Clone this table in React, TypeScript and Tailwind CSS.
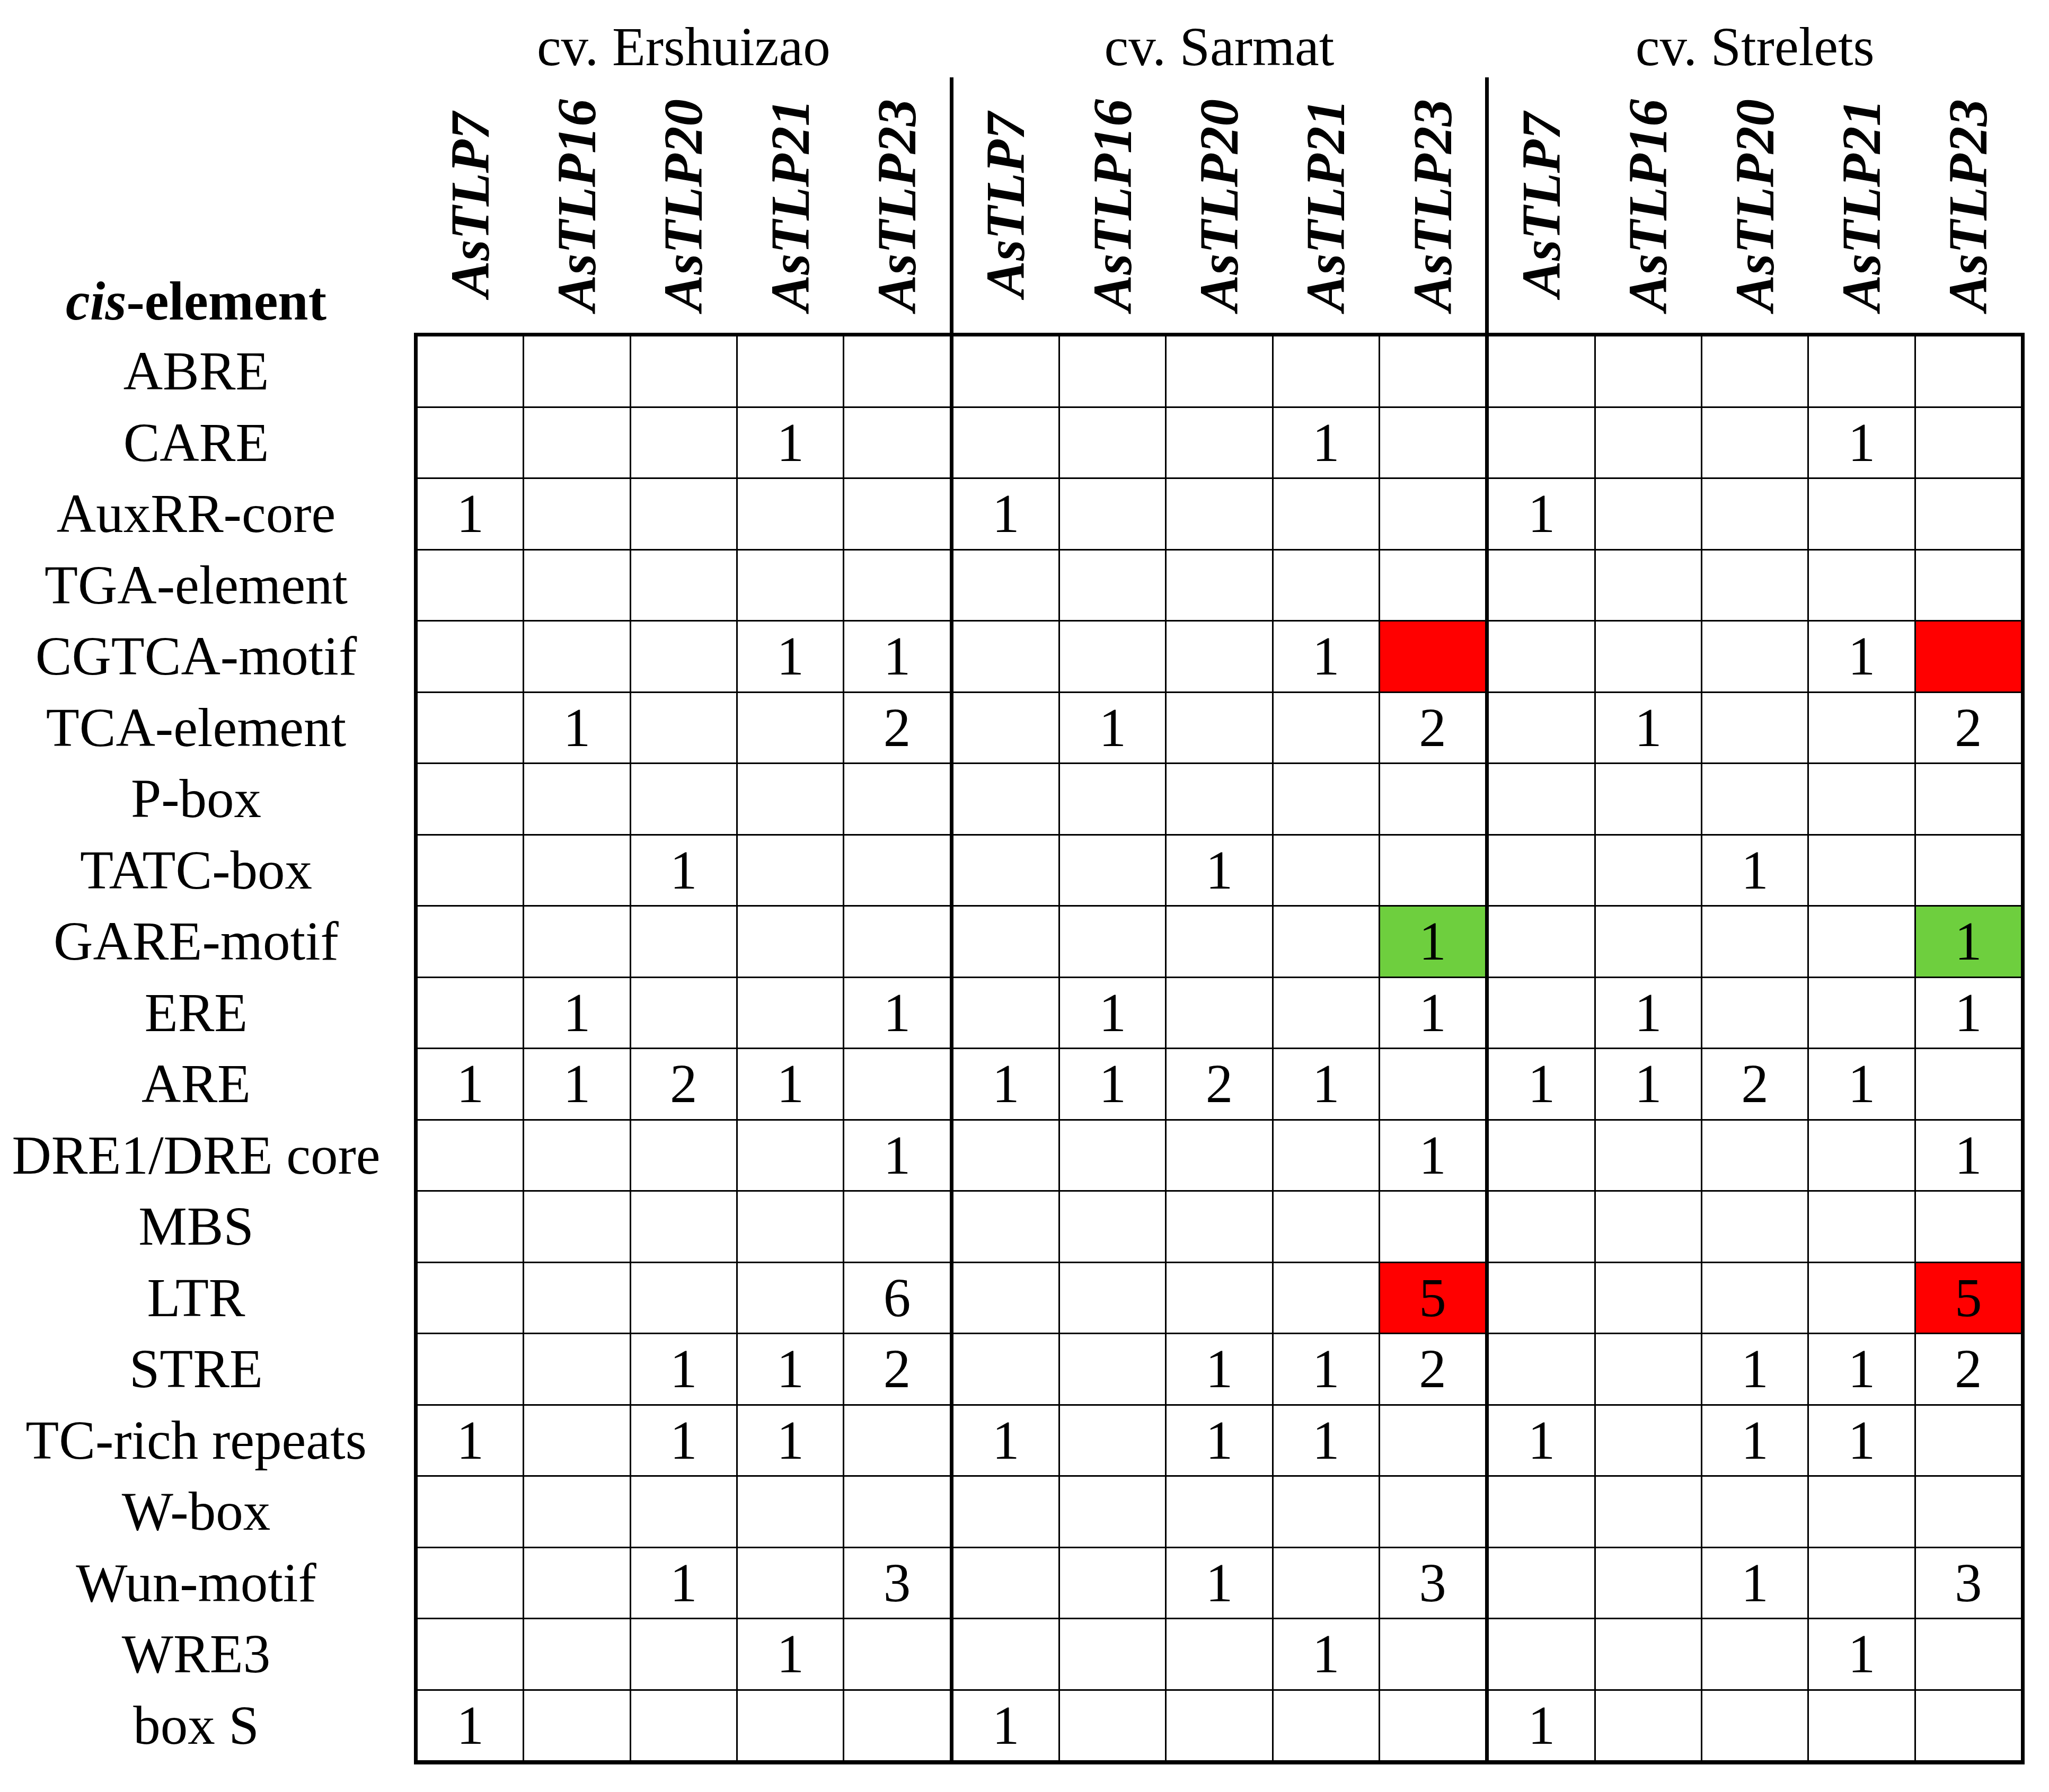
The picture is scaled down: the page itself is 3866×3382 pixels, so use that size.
type Cell = { v: string; c?: "red" | "green" };

const sections = ["cv. Ershuizao", "cv. Sarmat", "cv. Strelets"];
const genes = ["AsTLP7", "AsTLP16", "AsTLP20", "AsTLP21", "AsTLP23"];

// counts per cis-element, same five genes in every cultivar
const rows: { name: string; base: string[]; alt?: Cell }[] = [
  { name: "ABRE", base: ["", "", "", "", ""] },
  { name: "CARE", base: ["", "", "", "1", ""] },
  { name: "AuxRR-core", base: ["1", "", "", "", ""] },
  { name: "TGA-element", base: ["", "", "", "", ""] },
  { name: "CGTCA-motif", base: ["", "", "", "1", "1"], alt: { v: "", c: "red" } },
  { name: "TCA-element", base: ["", "1", "", "", "2"] },
  { name: "P-box", base: ["", "", "", "", ""] },
  { name: "TATC-box", base: ["", "", "1", "", ""] },
  { name: "GARE-motif", base: ["", "", "", "", ""], alt: { v: "1", c: "green" } },
  { name: "ERE", base: ["", "1", "", "", "1"] },
  { name: "ARE", base: ["1", "1", "2", "1", ""] },
  { name: "DRE1/DRE core", base: ["", "", "", "", "1"] },
  { name: "MBS", base: ["", "", "", "", ""] },
  { name: "LTR", base: ["", "", "", "", "6"], alt: { v: "5", c: "red" } },
  { name: "STRE", base: ["", "", "1", "1", "2"] },
  { name: "TC-rich repeats", base: ["1", "", "1", "1", ""] },
  { name: "W-box", base: ["", "", "", "", ""] },
  { name: "Wun-motif", base: ["", "", "1", "", "3"] },
  { name: "WRE3", base: ["", "", "", "1", ""] },
  { name: "box S", base: ["1", "", "", "", ""] },
];

function cellsFor(r: (typeof rows)[number]): Cell[] {
  const out: Cell[] = [];
  for (let s = 0; s < 3; s++) {
    r.base.forEach((v, i) => {
      if (s > 0 && i === 4 && r.alt) out.push(r.alt);
      else out.push({ v });
    });
  }
  return out;
}

function leftBorder(j: number) {
  return j === 0 || j === 5 || j === 10 ? "border-l-[7px]" : "border-l-[3px]";
}

export default function App() {
  return (
    <div className="w-[3866px] h-[3382px] bg-white text-black font-['Liberation_Serif','Times_New_Roman',serif] text-[103px] leading-none">
      {/* cultivar titles */}
      <div className="flex h-[146px]">
        <div className="w-[781px] shrink-0" />
        <div className="flex w-[3039px] shrink-0 border-x-[7px] border-transparent">
          {sections.map((s, i) => (
            <div
              key={s}
              className={`flex-1 pt-[37px] text-center whitespace-nowrap ${i > 0 ? "border-l-[7px] border-transparent" : ""}`}
            >
              {s}
            </div>
          ))}
        </div>
      </div>

      {/* gene names */}
      <div className="flex h-[482px]">
        <div className="w-[781px] shrink-0 pr-[41px] pb-[8px] flex items-end justify-center font-bold whitespace-nowrap">
          <span>
            <span className="italic">cis</span>-element
          </span>
        </div>
        <div className="flex w-[3039px] shrink-0">
          {Array.from({ length: 15 }).map((_, j) => (
            <div
              key={j}
              className={`flex-1 flex items-center justify-center ${leftBorder(j)} ${
                j === 5 || j === 10 ? "border-black" : "border-transparent"
              } ${j === 14 ? "border-r-[7px] border-r-transparent" : ""}`}
            >
              <span className="[writing-mode:vertical-rl] rotate-180 font-bold italic whitespace-nowrap">
                {genes[j % 5]}
              </span>
            </div>
          ))}
        </div>
      </div>

      {/* table body */}
      {rows.map((r, i) => {
        const first = i === 0;
        const last = i === rows.length - 1;
        const h = first ? "h-[141.5px]" : last ? "h-[139.5px]" : "h-[134.5px]";
        const edges = `${first ? "border-t-[7px]" : ""} ${last ? "border-b-[8px]" : "border-b-[3px]"}`;
        return (
          <div key={r.name} className={`flex ${h}`}>
            <div
              className={`w-[781px] shrink-0 pr-[41px] flex items-center justify-center whitespace-nowrap border-transparent ${edges}`}
            >
              {r.name}
            </div>
            <div className={`flex w-[3039px] shrink-0 border-black ${edges}`}>
              {cellsFor(r).map((c, j) => (
                <div
                  key={j}
                  className={`flex-1 flex items-center justify-center border-black ${leftBorder(j)} ${
                    j === 14 ? "border-r-[7px]" : ""
                  } ${c.c === "red" ? "bg-[#ff0000]" : c.c === "green" ? "bg-[#6ecf3e]" : ""}`}
                >
                  {c.v}
                </div>
              ))}
            </div>
          </div>
        );
      })}
    </div>
  );
}
